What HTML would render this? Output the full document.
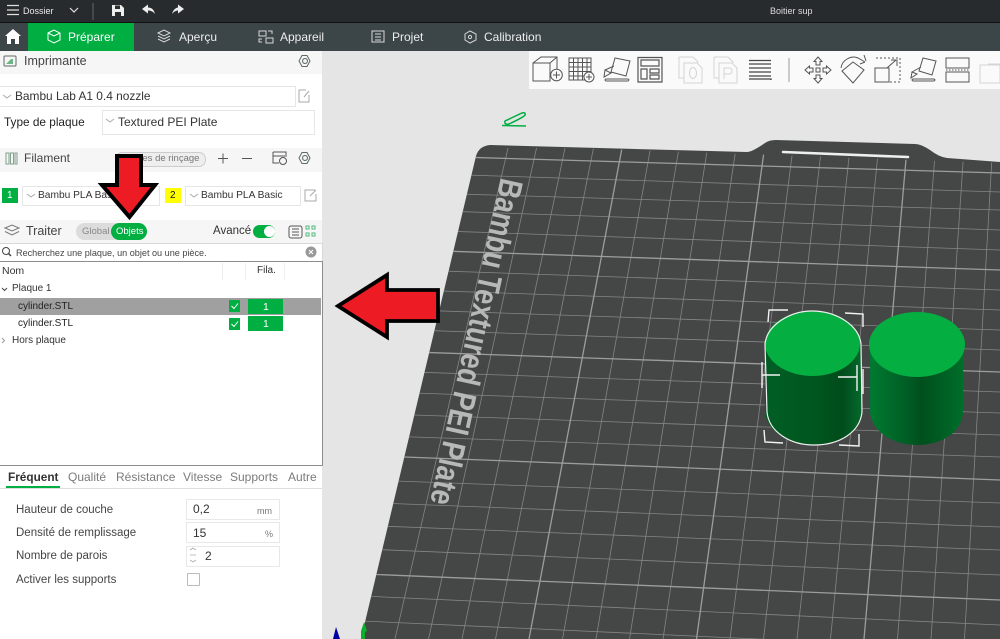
<!DOCTYPE html>
<html lang="fr"><head><meta charset="utf-8"><title>Boitier sup</title>
<style>
html,body{margin:0;padding:0;background:#e5e5e5}
#r{position:relative;width:1000px;height:639px;overflow:hidden;background:#e5e5e5;font-family:"Liberation Sans",sans-serif;color:#333}
.b{position:absolute}
.t{position:absolute;white-space:nowrap;line-height:14px;height:14px;font-size:12px}
svg{position:absolute;left:0;top:0}
</style></head><body><div id="r">
<div class="b" style="left:0;top:0;width:1000px;height:22px;background:#272b2d"></div>
<div class="b" style="left:0;top:22px;width:1000px;height:1px;background:#111"></div>
<div class="b" style="left:0;top:23px;width:1000px;height:28px;background:#3c4548"></div>
<div class="b" style="left:28px;top:23px;width:106px;height:28px;background:#00ae42"></div>
<div class="b" style="left:0;top:51px;width:322px;height:588px;background:#fff"></div>
<div class="b" style="left:0;top:51px;width:322px;height:23px;background:#f6f6f6"></div>
<div class="b" style="left:0;top:148px;width:322px;height:24px;background:#f6f6f6"></div>
<div class="b" style="left:0;top:220px;width:322px;height:23px;background:#f6f6f6"></div>
<div class="b" style="left:529px;top:51px;width:471px;height:38px;background:#fafafa"></div>
<div class="b" style="left:-1px;top:86px;width:295px;height:19px;border:1px solid #e6e6e6"></div>
<div class="b" style="left:102px;top:110px;width:211px;height:23px;border:1px solid #e6e6e6"></div>
<div class="b" style="left:22px;top:186px;width:136px;height:18px;border:1px solid #e6e6e6"></div>
<div class="b" style="left:185px;top:186px;width:114px;height:18px;border:1px solid #e6e6e6"></div>
<div class="b" style="left:115px;top:152px;width:89px;height:13px;background:#eee;border:1px solid #ccc;border-radius:7px"></div>
<div class="b" style="left:2px;top:188px;width:16px;height:15px;background:#00ae42"></div>
<div class="b" style="left:165px;top:188px;width:16px;height:15px;background:#ffff00"></div>
<div class="b" style="left:76px;top:223px;width:71px;height:17px;background:#dcdcdc;border-radius:9px"></div>
<div class="b" style="left:111px;top:223px;width:36px;height:17px;background:#00ae42;border-radius:9px"></div>
<div class="b" style="left:253px;top:225px;width:22px;height:13px;background:#00ae42;border-radius:7px"></div>
<div class="b" style="left:264px;top:226px;width:11px;height:11px;background:#fff;border-radius:50%"></div>
<div class="b" style="left:-1px;top:243px;width:322px;height:17px;border:1px solid #d8d8d8;background:#fff"></div>
<div class="b" style="left:-1px;top:261px;width:322px;height:203px;border:1px solid #8c8c8c;background:#fff"></div>
<div class="b" style="left:0;top:298px;width:321px;height:17px;background:#a0a0a0"></div>
<div class="b" style="left:222px;top:263px;width:1px;height:17px;background:#eee"></div>
<div class="b" style="left:245px;top:263px;width:1px;height:17px;background:#eee"></div>
<div class="b" style="left:284px;top:263px;width:1px;height:17px;background:#eee"></div>
<div class="b" style="left:229px;top:300px;width:11px;height:12px;background:#00ae42"></div>
<div class="b" style="left:229px;top:318px;width:11px;height:12px;background:#00ae42"></div>
<div class="b" style="left:248px;top:299px;width:35px;height:15px;background:#00ae42"></div>
<div class="b" style="left:248px;top:316px;width:35px;height:15px;background:#00ae42"></div>
<div class="b" style="left:0;top:488px;width:322px;height:1px;background:#ddd"></div>
<div class="b" style="left:6px;top:486px;width:54px;height:2px;background:#00ae42"></div>
<div class="b" style="left:186px;top:499px;width:92px;height:19px;border:1px solid #e8e8e8"></div>
<div class="b" style="left:186px;top:522px;width:92px;height:19px;border:1px solid #e8e8e8"></div>
<div class="b" style="left:186px;top:546px;width:92px;height:19px;border:1px solid #e8e8e8"></div>
<div class="b" style="left:187px;top:573px;width:11px;height:11px;border:1px solid #bbb;border-radius:1px"></div>

<svg width="1000" height="639" viewBox="0 0 1000 639">
<defs>
<clipPath id="pc"><path d="M361 639L476 156Q479 146 490 145L1000 163V639Z"/></clipPath>
<linearGradient id="cg" x1="0" x2="1"><stop offset="0" stop-color="#005f25"/><stop offset=".5" stop-color="#00561f"/><stop offset=".8" stop-color="#004c1b"/><stop offset="1" stop-color="#066a2c"/></linearGradient>
<linearGradient id="cg2" x1="0" x2="1"><stop offset="0" stop-color="#007a30"/><stop offset=".4" stop-color="#005d25"/><stop offset=".55" stop-color="#004f1c"/><stop offset="1" stop-color="#006e2a"/></linearGradient>
</defs>
<path d="M361 639L476 156Q479 146 490 145L747 152Q752 152 765 143Q769 140 776 140L915 144Q921 144 930 150Q939 157 947 158L1000 162V639Z" fill="#454746"/>
<g clip-path="url(#pc)" fill="none" stroke="#848584" stroke-width=".8">
<path d="M508 148L395 639M536.5 148L428.5 639M565 148L462 639M593.5 148L495.5 639M650.5 148L562.5 639M679 148L596 639M707.5 148L629.5 639M736 148L663 639M793 148L730 639M821.5 148L763.5 639M850 148L797 639M878.5 148L830.5 639M935.5 148L897.5 639M964 148L931 639M992.5 148L964.5 639"/>
<path d="M340 171L1000 192M340 190.5L1000 210M340 207.5L1000 230M340 227.5L1000 250M340 267.5L1000 290M340 287.5L1000 310M340 307.5L1000 330M340 327.5L1000 350M340 369.5L1000 392M340 390.5L1000 413M340 412.500L1000 435M340 434.5L1000 457M340 479L1000 503M340 501.5L1000 527M340 524.5L1000 550M340 548L1000 575M340 595L1000 625M340 620L1000 650"/>
<g stroke="#9c9d9c" stroke-width="1.3"><path d="M622 148L529 639M764.5 148L696.5 639M907 148L864 639M340 153.5L1000 173M340 247.5L1000 270M340 349.5L1000 372M340 454.5L1000 480M340 573L1000 600"/></g>
</g>
<path d="M783 152L908 157" stroke="#efefef" stroke-width="2.6" stroke-linecap="round"/>
<text transform="translate(501 177) rotate(102.3)" font-family="Liberation Sans,sans-serif" font-size="33" font-weight="bold" fill="#b8b8b8" textLength="333" lengthAdjust="spacingAndGlyphs">Bambu Textured PEI Plate</text>
<!-- cylinders -->
<path d="M765 344V412C767 432 790 445 814 445C840 445 860 432 862 412V344Z" fill="url(#cg)"/>
<path d="M870 345V412C872 432 893 445 917 445C942 445 962 432 963 412V345Z" fill="url(#cg2)"/>
<ellipse cx="812.5" cy="343.5" rx="47.5" ry="32.5" fill="#04ae41"/>
<ellipse cx="917" cy="344.5" rx="48" ry="32.5" fill="#04ae41"/>
<path d="M765 344C767 325 790 311 812 311C836 311 859 325 861 344L862 412C860 432 840 445 814 445C790 445 769 432 767 412Z" fill="none" stroke="#f0f0f0" stroke-width="1.2"/>
<path d="M768 322L769 310L788 310M845 313L863 314V327M764 430L765 442L783 443M859 434L859 446L839 445M762 362V388M762 375H780M838 377H857M857 365V391M863 369V394" fill="none" stroke="#f2f2f2" stroke-width="1.4"/>
<!-- pencil -->
<path d="M505 121L522 113Q526 112 525 115Q524 117 509 124Q504 125 505 121ZM502 125.5L526 126" fill="none" stroke="#00ae42" stroke-width="1.5"/>
<!-- axes -->
<path d="M333 639L336 627L340 639Z" fill="#0000a0"/>
<path d="M361 631L364 622L367 631L365 632V639H361V632Z" fill="#0ab02a"/>
<!-- topbar icons -->
<g fill="none" stroke="#e0e0e0">
<path d="M7 5.5H19M7 10H19M7 14.500H19" stroke-width="1.200"/>
<path d="M70 8L74 12L78 8" stroke-width="1.200"/>
</g>
<path d="M93 3V20" stroke="#666"/>
<path d="M112 5H121L124 8V16H112Z" fill="#eee"/><path d="M115 5.5H120V9H115ZM115 12H121V16H115Z" fill="#2b2e2f"/>
<path d="M142 9L148 4.5V7.5C152 7.5 154 10 155 14C153 11.5 151 10.5 148 10.5V13.5Z" fill="#eee"/>
<path d="M184 9L178 4.5V7.5C176 7.5 173 10 172 14C174 11.5 176 10.5 178 10.5V13.5Z" fill="#eee"/>
<path d="M5 36L13 29L21 36H19V44H15V39H11V44H7V36Z" fill="#fff"/>
<g fill="none" stroke="#fff" stroke-width="1"><path d="M48 33L54 30L60 33V40L54 43L48 40ZM48 33L54 36L60 33"/></g>
<g fill="none" stroke="#d8d8d8" stroke-width="1">
<path d="M158 33L164 30L170 33L164 36ZM158 36L164 39L170 36M158 39L164 42L170 39"/>
<path d="M259 31H266V36H259ZM262 39H259V42H262M268 31H272V34M266 38H273V43H266Z"/>
<path d="M372 31H384V42H372ZM375 34H381M375 37H381M375 40H381"/>
<path d="M470 31L476 34V40L470 43L465 40V34Z"/><circle cx="470" cy="37" r="1.6"/>
</g>
<!-- panel icons -->
<g fill="none" stroke="#5d6b63" stroke-width="1">
<rect x="4" y="56" width="12" height="10" rx="1"/><path d="M6 64L11 59H13V64Z" fill="#6fb58a" stroke="none"/>
<path d="M299 61L302 55.5H307L310 61L307 66.5H302Z M305 58.5a2.5 2.5 0 1 0 .01 0"/>
<path d="M299 158L302 152.5H307L310 158L307 163.5H302Z M305 155.5a2.5 2.5 0 1 0 .01 0"/>
<path d="M6 153H9V164H6ZM10.500 153H13.500V164H10.500ZM15 153H17V164H15Z" stroke="#83a08f"/>
<path d="M218 158.500H228M223 153.500V163.500M242 158.500H252" stroke="#555"/>
<path d="M273 152H286V157M273 152V163H279M273 156H285" stroke="#555"/><circle cx="283" cy="161" r="3.500" stroke="#555"/>
<path d="M5 228L12 225L19 228L12 231ZM5 231.500L12 235L19 231.500" stroke="#777"/>
<rect x="289" y="226" width="13" height="12" rx="2" stroke="#555"/><path d="M292 229H299M292 232H299M292 235H299" stroke="#555"/>
<path d="M306 226h3v3h-3zM312 226h3v3h-3zM306 233h3v3h-3zM312 233h3v3h-3z" stroke="#51b87b"/>
<circle cx="6" cy="251" r="3.500" stroke="#444"/><path d="M8.500 253.500L11 256" stroke="#444" stroke-width="1.500"/>
</g>
<g fill="none" stroke="#aaa" stroke-width="1">
<path d="M3 95L7 98L11 95M106 119L110 122L114 119M27 194L31 197L35 194M190 194L194 197L198 194"/>
<path d="M306 90H299V102H309V95M304 97L309 91"/><path d="M315 190H305V201H316V194M310 196L316 190"/>
</g>
<circle cx="311" cy="252" r="5.500" fill="#999"/><path d="M309 250L313 254M313 250L309 254" stroke="#fff"/>
<path d="M2 288L4.500 290.500L7 288" fill="none" stroke="#444"/><path d="M2 338L4.500 340.500L2 343" fill="none" stroke="#999"/>
<path d="M231.500 306L234 308.500L238 303.500M231.500 324L234 326.500L238 321.500" fill="none" stroke="#fff"/>
<path d="M190 550L193 548L196 550M190 560L193 562L196 560M190 555H196" fill="none" stroke="#aaa" stroke-width=".8"/>
<!-- toolbar icons -->
<g fill="none" stroke="#555" stroke-width="1">
<path d="M533 63L541 57H557V72M533 63H550V81H533ZM550 63L557 57"/><circle cx="556.500" cy="75" r="5.800" fill="#fafafa"/><path d="M553 75H560M556.500 71.500V78.500"/>
<path d="M569 58H591V80H569ZM569 62.500H591M569 67H591M569 71.500H591M569 76H591M573.500 58V80M578 58V80M582.500 58V80M587 58V80"/><circle cx="589" cy="77" r="5" fill="#fafafa"/><path d="M586 77H592M589 74V80"/>
<path d="M615 58L630 61L626 76L611 72ZM605 70L614 66M605 70L604 77L611 73ZM606 81H628Q630 79.500 628 79H606Q604 80 606 81Z"/>
<path d="M638 57.500H662V82H638ZM641 60H659V66H641ZM641 69H647V79H641ZM650 69H659V73H650ZM650 75H659V79H650Z" stroke-width="1.200"/>
<path d="M749 60.500H771M749 79H771V80M749 64H771M749 68H771M749 72H771M749 76H771" stroke="#444" stroke-width="1.300"/>
<path d="M789 58V82" stroke="#999"/>
<path d="M818 57L822 61.500H820V65H816V61.500H814ZM818 83L822 78.500H820V75H816V78.500H814ZM805 70L809.500 66V68H813V72H809.500V74ZM831 70L826.500 66V68H823V72H826.500V74Z"/><rect x="816" y="68" width="4" height="4"/>
<path d="M853 62L864 70L853 83L842 71Z"/><path d="M841 68C842 60 851 55 858 58L865 62M865 62L860 64M866 61L864 55"/>
<path d="M875 68H889V82H875Z"/><path d="M876 58H900V82H889" stroke-dasharray="2 2"/><path d="M887 68L896 60M891 60H897V66"/>
<path d="M923 58L936 61L932 75L919 71ZM912 72L921 67M912 72L911 78L917 74ZM913 81H934Q936 80 934 79H913Q911 80 913 81Z"/>
<path d="M946 58H969V68H946ZM946 72H969V82H946Z"/><path d="M946 70H969" stroke-dasharray="1.500 1.500"/>
</g>
<g fill="none" stroke="#d4d4d4" stroke-width="1">
<path d="M679 57H693L698 62V63M679 57V78H684M684 63H697L702 68V83H684Z"/><ellipse cx="693" cy="73" rx="3.500" ry="5.500"/>
<path d="M714 57H728L733 62V63M714 57V78H719M719 63H732L737 68V83H719ZM724 79V68H729Q732 68 732 71Q732 74 729 74H724"/>
<path d="M988 64H1000M980 65H1000V83H980Z"/>
</g>
</svg>

<span class="t" style="left:23px;top:4px;font-size:9px;color:#e8e8e8">Dossier</span>
<span class="t" style="left:770px;top:4px;font-size:9px;color:#dcdcdc">Boitier sup</span>
<span class="t" style="left:68px;top:30px;font-size:12px;color:#fff">Préparer</span>
<span class="t" style="left:179px;top:30px;font-size:12px;color:#eee">Aperçu</span>
<span class="t" style="left:280px;top:30px;font-size:12px;color:#eee">Appareil</span>
<span class="t" style="left:392px;top:30px;font-size:12px;color:#eee">Projet</span>
<span class="t" style="left:484px;top:30px;font-size:12px;color:#eee">Calibration</span>
<span class="t" style="left:24px;top:54px;font-size:12.500px;color:#444">Imprimante</span>
<span class="t" style="left:15px;top:89px;font-size:11.900px">Bambu Lab A1 0.4 nozzle</span>
<span class="t" style="left:4px;top:115px;font-size:11.800px;color:#222">Type de plaque</span>
<span class="t" style="left:118px;top:115px;font-size:12px">Textured PEI Plate</span>
<span class="t" style="left:24px;top:151px;font-size:12px;color:#444">Filament</span>
<span class="t" style="left:116px;top:152px;font-size:9.500px;color:#777">Volumes de rinçage</span>
<span class="t" style="left:38px;top:189px;font-size:10.200px">Bambu PLA Basic</span>
<span class="t" style="left:201px;top:189px;font-size:10.200px">Bambu PLA Basic</span>
<span class="t" style="left:7px;top:189px;font-size:10px;color:#fff">1</span>
<span class="t" style="left:170px;top:189px;font-size:10px;color:#111">2</span>
<span class="t" style="left:26px;top:224px;font-size:12.500px;color:#444">Traiter</span>
<span class="t" style="left:82px;top:225px;font-size:9.500px;color:#888">Global</span>
<span class="t" style="left:116px;top:225px;font-size:9.500px;color:#fff">Objets</span>
<span class="t" style="left:213px;top:224px;font-size:11.500px">Avancé</span>
<span class="t" style="left:16px;top:246px;font-size:9.100px;color:#444">Recherchez une plaque, un objet ou une pièce.</span>
<span class="t" style="left:2px;top:264px;font-size:10.500px">Nom</span>
<span class="t" style="left:257px;top:264px;font-size:10px">Fila.</span>
<span class="t" style="left:12px;top:282px;font-size:10px">Plaque 1</span>
<span class="t" style="left:18px;top:300px;font-size:10px;color:#222">cylinder.STL</span>
<span class="t" style="left:18px;top:317px;font-size:10px;color:#222">cylinder.STL</span>
<span class="t" style="left:12px;top:334px;font-size:10px">Hors plaque</span>
<span class="t" style="left:263px;top:300px;font-size:10.500px;color:#fff">1</span>
<span class="t" style="left:263px;top:317px;font-size:10.500px;color:#fff">1</span>
<span class="t" style="left:8px;top:470px;font-size:11.800px;font-weight:bold;color:#333">Fréquent</span>
<span class="t" style="left:68px;top:470px;font-size:12px;color:#7b7b7b">Qualité</span>
<span class="t" style="left:116px;top:470px;font-size:12px;color:#7b7b7b">Résistance</span>
<span class="t" style="left:183px;top:470px;font-size:12px;color:#7b7b7b">Vitesse</span>
<span class="t" style="left:230px;top:470px;font-size:12px;color:#7b7b7b">Supports</span>
<span class="t" style="left:288px;top:470px;font-size:12px;color:#7b7b7b">Autre</span>
<span class="t" style="left:16px;top:503px;font-size:11.500px;color:#444">Hauteur de couche</span>
<span class="t" style="left:16px;top:526px;font-size:11.500px;color:#444">Densité de remplissage</span>
<span class="t" style="left:16px;top:549px;font-size:11.500px;color:#444">Nombre de parois</span>
<span class="t" style="left:16px;top:573px;font-size:11.500px;color:#444">Activer les supports</span>
<span class="t" style="left:193px;top:502px;font-size:12px">0,2</span>
<span class="t" style="left:193px;top:526px;font-size:12px">15</span>
<span class="t" style="left:205px;top:549px;font-size:12px">2</span>
<span class="t" style="left:257px;top:504px;font-size:9px;color:#777">mm</span>
<span class="t" style="left:265px;top:527px;font-size:9px;color:#777">%</span>

<svg width="1000" height="639" viewBox="0 0 1000 639">
<path d="M117 156H141V185H155L129.500 217L102 185H117Z" fill="#ed1c24" stroke="#000" stroke-width="4"/>
<path d="M338 306L387 275V290H438V321H387V337Z" fill="#ed1c24" stroke="#000" stroke-width="3.800"/>
</svg>
</div></body></html>
